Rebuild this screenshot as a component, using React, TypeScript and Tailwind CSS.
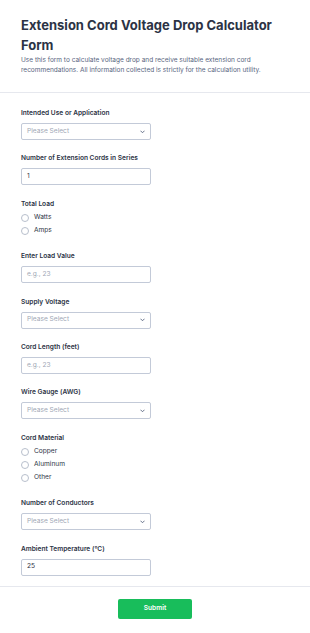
import React from "react";

const Chevron = () => (
  <svg width="5" height="4" viewBox="0 0 10 7" className="text-[#57647e]">
    <path d="M1.5 1.5 L5 5 L8.5 1.5" fill="none" stroke="currentColor" strokeWidth="1.8" strokeLinecap="round" strokeLinejoin="round" />
  </svg>
);

const Label: React.FC<{ children: React.ReactNode }> = ({ children }) => (
  <label className="block text-[6.6px] font-semibold leading-[10px] text-[#2c3345]">{children}</label>
);

const SelectField: React.FC<{ label: string }> = ({ label }) => (
  <div>
    <Label>{label}</Label>
    <div className="mt-[5px] flex h-[17px] w-[130px] items-center justify-between rounded-[2px] border border-[#c3cad8] bg-white pl-[5px] pr-[5px]">
      <span className="text-[6.6px] text-[#a0a7b5]">Please Select</span>
      <Chevron />
    </div>
  </div>
);

const InputField: React.FC<{ label: string; value?: string; placeholder?: string }> = ({ label, value, placeholder }) => (
  <div>
    <Label>{label}</Label>
    <div className="mt-[5px] flex h-[17px] w-[130px] items-center rounded-[2px] border border-[#c3cad8] bg-white pl-[5px]">
      {value ? (
        <span className="text-[6.6px] text-[#2c3345]">{value}</span>
      ) : (
        <span className="text-[6.6px] text-[#a0a7b5]">{placeholder}</span>
      )}
    </div>
  </div>
);

const RadioField: React.FC<{ label: string; options: string[] }> = ({ label, options }) => (
  <div>
    <Label>{label}</Label>
    <div className="mt-[3px]">
      {options.map((o) => (
        <div key={o} className="flex h-[13px] items-center gap-[5px]">
          <span className="h-[8px] w-[8px] rounded-full border border-[#b8bfcc] bg-white" />
          <span className="text-[6.6px] text-[#2c3345]">{o}</span>
        </div>
      ))}
    </div>
  </div>
);

export default function App() {
  return (
    <div className="min-h-screen w-[310px] bg-white font-['Inter',sans-serif]">
      <div className="px-[21px] pt-[15px] pb-[17px]">
        <h1 className="text-[13px] font-bold leading-[20px] text-[#2c3345]">
          Extension Cord Voltage Drop Calculator Form
        </h1>
        <p className="text-[6.5px] leading-[10px] text-[#57647e]">
          Use this form to calculate voltage drop and receive suitable extension cord recommendations. All information collected is strictly for the calculation utility.
        </p>
      </div>
      <div className="h-px bg-[#e6e8ee]" />
      <div className="flex flex-col gap-[13.4px] px-[21px] pt-[15px] pb-[10.5px]">
        <SelectField label="Intended Use or Application" />
        <InputField label="Number of Extension Cords in Series" value="1" />
        <RadioField label="Total Load" options={["Watts", "Amps"]} />
        <InputField label="Enter Load Value" placeholder="e.g., 23" />
        <SelectField label="Supply Voltage" />
        <InputField label="Cord Length (feet)" placeholder="e.g., 23" />
        <SelectField label="Wire Gauge (AWG)" />
        <RadioField label="Cord Material" options={["Copper", "Aluminum", "Other"]} />
        <SelectField label="Number of Conductors" />
        <InputField label="Ambient Temperature (°C)" value="25" />
      </div>
      <div className="h-px bg-[#e6e8ee]" />
      <div className="flex justify-center pt-[12px]">
        <button className="h-[20px] w-[74px] rounded-[2px] bg-[#18bd5b] text-[6.6px] font-semibold text-white">
          Submit
        </button>
      </div>
    </div>
  );
}
